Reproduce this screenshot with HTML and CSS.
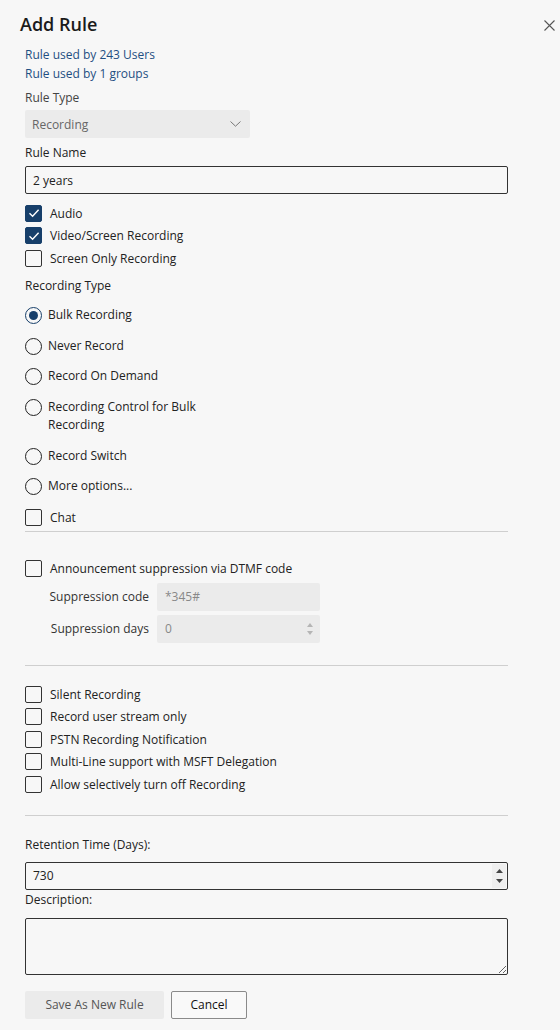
FILE: index.html
```html
<!DOCTYPE html>
<html lang="en">
<head>
<meta charset="utf-8">
<title>Add Rule</title>
<link rel="stylesheet" href="styles.css">
</head>
<body>
<div class="panel">
  <header class="header">
    <h1 class="title">Add Rule</h1>
    <button class="close" aria-label="Close">
      <svg width="11" height="11" viewBox="0 0 11 11"><path d="M0.5 0.5L10.5 10.5M10.5 0.5L0.5 10.5" stroke="#555" stroke-width="1.1" fill="none"/></svg>
    </button>
  </header>

  <div class="content">
    <div class="links">
      <a class="link">Rule used by 243 Users</a>
      <a class="link">Rule used by 1 groups</a>
    </div>

    <div class="label label-muted gap-5">Rule Type</div>
    <div class="select">
      <span>Recording</span>
      <svg width="11" height="6" viewBox="0 0 11 6"><path d="M0.5 0.5L5.5 5.2L10.5 0.5" stroke="#777" stroke-width="1" fill="none"/></svg>
    </div>

    <div class="label gap-5">Rule Name</div>
    <input class="text-input" type="text" value="2 years">

    <div class="check-list first-checks">
      <div class="check-row"><span class="box checked"><svg width="12" height="10" viewBox="0 0 12 10"><path d="M1.5 5.2L4.6 8.2L10.6 1.8" stroke="#fff" stroke-width="1.4" fill="none"/></svg></span><span>Audio</span></div>
      <div class="check-row"><span class="box checked"><svg width="12" height="10" viewBox="0 0 12 10"><path d="M1.5 5.2L4.6 8.2L10.6 1.8" stroke="#fff" stroke-width="1.4" fill="none"/></svg></span><span>Video/Screen Recording</span></div>
      <div class="check-row"><span class="box"></span><span>Screen Only Recording</span></div>
    </div>

    <div class="label rec-type">Recording Type</div>
    <div class="radio-list">
      <div class="radio-row"><span class="radio on"><span class="dot"></span></span><span class="radio-text">Bulk Recording</span></div>
      <div class="radio-row"><span class="radio"></span><span class="radio-text">Never Record</span></div>
      <div class="radio-row"><span class="radio"></span><span class="radio-text">Record On Demand</span></div>
      <div class="radio-row"><span class="radio"></span><span class="radio-text">Recording Control for Bulk Recording</span></div>
      <div class="radio-row"><span class="radio"></span><span class="radio-text">Record Switch</span></div>
      <div class="radio-row"><span class="radio"></span><span class="radio-text">More options...</span></div>
    </div>

    <div class="check-row chat"><span class="box"></span><span>Chat</span></div>
    <div class="sep sep-1"></div>

    <div class="check-row announce"><span class="box"></span><span>Announcement suppression via DTMF code</span></div>
    <div class="supp-grid">
      <span class="supp-label">Suppression code</span>
      <input class="supp-input" type="text" value="*345#" disabled>
      <span class="supp-label">Suppression days</span>
      <div class="supp-field">
        <input class="supp-num" type="text" value="0" disabled>
        <span class="spin spin-disabled">
          <svg width="6" height="4" viewBox="0 0 6 4"><path d="M0 4L3 0L6 4Z" fill="#b5b5b5"/></svg>
          <svg width="6" height="4" viewBox="0 0 6 4"><path d="M0 0L3 4L6 0Z" fill="#b5b5b5"/></svg>
        </span>
      </div>
    </div>
    <div class="sep sep-2"></div>

    <div class="check-list options">
      <div class="check-row"><span class="box"></span><span>Silent Recording</span></div>
      <div class="check-row"><span class="box"></span><span>Record user stream only</span></div>
      <div class="check-row"><span class="box"></span><span>PSTN Recording Notification</span></div>
      <div class="check-row"><span class="box"></span><span>Multi-Line support with MSFT Delegation</span></div>
      <div class="check-row"><span class="box"></span><span>Allow selectively turn off Recording</span></div>
    </div>
    <div class="sep sep-3"></div>

    <div class="label retention-label">Retention Time (Days):</div>
    <div class="num-field">
      <input class="num-input" type="text" value="730">
      <span class="spin spin-active">
        <svg width="7" height="4" viewBox="0 0 7 4"><path d="M0 4L3.5 0L7 4Z" fill="#444"/></svg>
        <svg width="7" height="4" viewBox="0 0 7 4"><path d="M0 0L3.5 4L7 0Z" fill="#444"/></svg>
      </span>
    </div>
    <div class="label">Description:</div>
    <textarea class="textarea"></textarea>

    <div class="actions">
      <button class="btn btn-save">Save As New Rule</button>
      <button class="btn btn-cancel">Cancel</button>
    </div>
  </div>
</div>
</body>
</html>
```

FILE: styles.css
```css
* { box-sizing: border-box; }

html, body {
  margin: 0;
  padding: 0;
  background: #f7f7f7;
}

body {
  font-family: "Open Sans", "Noto Sans", "Liberation Sans", sans-serif;
  font-size: 12px;
  color: #222;
}

.panel {
  width: 560px;
  height: 1030px;
}

.header {
  display: flex;
  justify-content: space-between;
  align-items: flex-start;
  height: 37px;
  padding: 12px 4px 0 20px;
}

.title {
  margin: 0;
  font-size: 18px;
  line-height: 24px;
  font-weight: 600;
  color: #1b1b1b;
}

.close {
  border: 0;
  background: transparent;
  padding: 0;
  margin-top: 8px;
  width: 12px;
  height: 12px;
  display: flex;
}

.content {
  padding: 0 52px 0 25px;
  display: flex;
  flex-direction: column;
  align-items: flex-start;
}

.links {
  margin-top: 8px;
  display: flex;
  flex-direction: column;
}

.link {
  color: #1f4f82;
  line-height: 19px;
}

.label {
  line-height: 20px;
  color: #222;
}

.label-muted { color: #444; }

.gap-5 { margin-top: 5px; }

.select {
  margin-top: 2px;
  width: 225px;
  height: 28px;
  background: #ebebeb;
  border-radius: 2px;
  display: flex;
  align-items: center;
  justify-content: space-between;
  padding: 0 9px 0 7px;
  color: #666;
}

.text-input {
  margin-top: 3px;
  width: 483px;
  height: 28px;
  border: 1px solid #333;
  border-radius: 2px;
  background: #f7f7f7;
  padding: 0 7px;
  font: inherit;
  color: #222;
  outline: none;
}

.check-list {
  display: flex;
  flex-direction: column;
}

.first-checks { margin-top: 8px; }

.check-row {
  height: 22.5px;
  display: flex;
  align-items: center;
  gap: 8px;
}

.box {
  width: 17px;
  height: 17px;
  border: 1px solid #333;
  border-radius: 2px;
  display: flex;
  align-items: center;
  justify-content: center;
  flex: none;
}

.box.checked {
  background: #173f6a;
  border-color: #173f6a;
}

.rec-type { margin-top: 6px; }

.radio-list {
  margin-top: 4.5px;
  width: 200px;
  display: flex;
  flex-direction: column;
}

.radio-row {
  display: flex;
  align-items: flex-start;
  gap: 6px;
  padding: 6px 0;
  line-height: 18.5px;
}

.radio {
  width: 17px;
  height: 17px;
  margin-top: 1px;
  border: 1.2px solid #222;
  border-radius: 50%;
  flex: none;
  display: flex;
  align-items: center;
  justify-content: center;
}

.radio.on { border-color: #173f6a; }

.dot {
  width: 9px;
  height: 9px;
  border-radius: 50%;
  background: #173f6a;
}

.chat { margin-top: 5px; }

.sep {
  width: 483px;
  height: 0;
  border-top: 1px solid #cfcfcf;
}

.sep-1 { margin-top: 1.5px; }

.announce { margin-top: 26px; }

.supp-grid {
  margin-top: 2.5px;
  display: grid;
  grid-template-columns: 124px 163px;
  row-gap: 4px;
  column-gap: 8px;
  align-items: center;
}

.supp-label {
  text-align: right;
  color: #333;
}

.supp-input,
.supp-field {
  height: 28px;
  border: 0;
  border-radius: 2px;
  background: #ebebeb;
  font: inherit;
  color: #888;
}

.supp-input { padding: 0 8px; }

.supp-field {
  display: flex;
  align-items: center;
  padding: 0 6px 0 8px;
}

.supp-num {
  flex: 1;
  min-width: 0;
  border: 0;
  background: transparent;
  padding: 0;
  font: inherit;
  color: #888;
}

.spin {
  display: flex;
  flex-direction: column;
  align-items: center;
  justify-content: center;
}

.spin-disabled {
  gap: 4px;
  width: 8px;
}

.sep-2 { margin-top: 22px; }

.options { margin-top: 17.5px; }

.sep-3 { margin-top: 19px; }

.retention-label { margin-top: 19.5px; }

.num-field {
  margin-top: 6.5px;
  width: 483px;
  height: 28px;
  border: 1px solid #333;
  border-radius: 2px;
  background: #f7f7f7;
  display: flex;
  align-items: stretch;
  padding: 1px;
}

.num-input {
  flex: 1;
  min-width: 0;
  border: 0;
  background: transparent;
  padding: 0 6px;
  font: inherit;
  color: #222;
  outline: none;
}

.spin-active {
  width: 14px;
  background: #efefef;
  gap: 6px;
}

.textarea {
  margin-top: 8px;
  width: 483px;
  height: 57px;
  border: 1px solid #333;
  border-radius: 2px;
  background: #f7f7f7;
  font: inherit;
  resize: vertical;
}

.actions {
  margin-top: 16px;
  display: flex;
  gap: 7px;
}

.btn {
  height: 28px;
  font: inherit;
  border-radius: 2px;
  padding: 0;
}

.btn-save {
  width: 139px;
  border: 0;
  background: #ebebeb;
  color: #555;
}

.btn-cancel {
  width: 76px;
  border: 1px solid #8a8a8a;
  background: #f9f9f9;
  color: #111;
}
```
